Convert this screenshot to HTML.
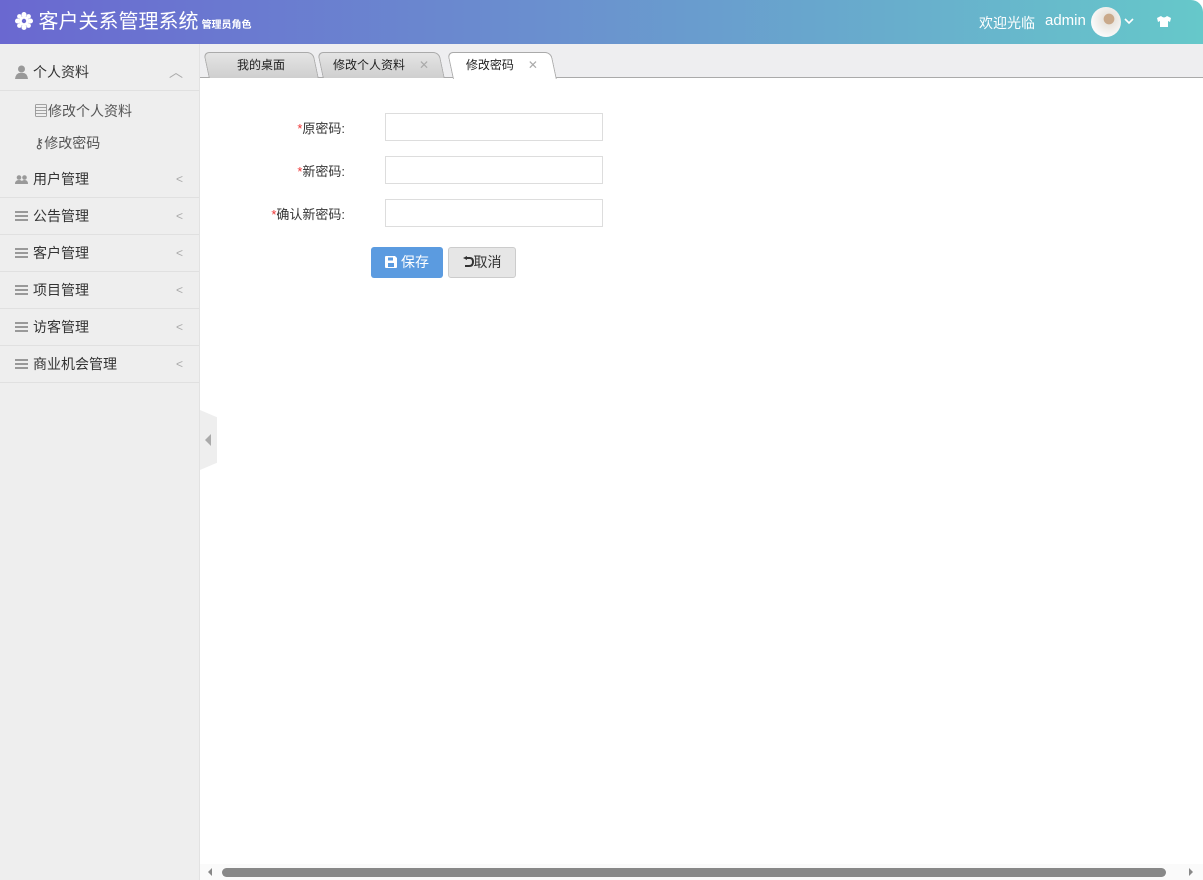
<!DOCTYPE html>
<html><head><meta charset="utf-8"><style>
*{margin:0;padding:0;box-sizing:border-box}
body{width:1203px;height:880px;overflow:hidden;font-family:"Liberation Sans","Noto Sans CJK SC",sans-serif;font-size:13px;color:#333;background:#fff;position:relative}
.hd{position:absolute;left:0;top:0;width:1203px;height:44px;background:linear-gradient(90deg,#6a68d0 0%,#6a8fcf 45%,#66c8ca 100%);border-top-right-radius:12px;color:#fff}
.hd .t{position:absolute;left:15px;top:9px;font-size:20px;line-height:26px}
.hd .t small{font-size:10px;font-weight:bold;margin-left:3px}
.side{position:absolute;left:0;top:44px;width:200px;height:836px;background:#eeeeee;border-right:1px solid #e2e2e2}
.it{position:absolute;left:0;width:199px;height:37px;border-bottom:1px solid #e0e0e0;line-height:37px;padding-left:33px;font-size:14px;color:#333}
.it .ic{position:absolute;left:15px;top:13px;width:13px;height:10px;border-top:2px solid #999;border-bottom:2px solid #999}
.it .ic:after{content:"";position:absolute;left:0;top:2px;width:13px;height:2px;background:#999}
.it .ar{position:absolute;right:16px;top:0;color:#aaa;font-size:12px}
.sub{position:absolute;left:34px;font-size:14px;color:#555}
.tabs{position:absolute;left:200px;top:44px;width:1003px;height:34px;background:#eeeef0;border-bottom:1px solid #aaa}
.tab{position:absolute;top:8px;height:26px;line-height:24px;text-align:center;font-size:12px;color:#222;background:linear-gradient(#e4e4e4,#cfcfcf);border:1px solid #aaa;border-bottom:none;border-radius:6px 6px 0 0;transform:skewX(12deg)}
.tab span{display:inline-block;transform:skewX(-12deg)}
.x{color:#aaa;margin-left:14px}
label.l{position:absolute;width:150px;left:195px;text-align:right;font-size:13px;color:#333}
label.l b{color:#e33;font-weight:normal}
.in{position:absolute;left:385px;width:218px;height:28px;border:1px solid #ddd;background:#fff}
.btn{position:absolute;top:247px;height:31px;line-height:31px;border-radius:3px;font-size:14px;text-align:center}
</style></head><body>
<div class="hd">
<div class="t"><svg width="18" height="18" style="vertical-align:-2px"><g fill="#fff"><circle cx="9" cy="9" r="5"/><circle cx="9" cy="2.5" r="2.5"/><circle cx="9" cy="15.5" r="2.5"/><circle cx="2.5" cy="9" r="2.5"/><circle cx="15.5" cy="9" r="2.5"/><circle cx="4.4" cy="4.4" r="2.3"/><circle cx="13.6" cy="4.4" r="2.3"/><circle cx="4.4" cy="13.6" r="2.3"/><circle cx="13.6" cy="13.6" r="2.3"/></g><circle cx="9" cy="9" r="2.2" fill="#6a68d0"/></svg> 客户关系管理系统<small>管理员角色</small></div>
<div style="position:absolute;left:979px;top:13px;font-size:14px">欢迎光临</div>
<div style="position:absolute;left:1045px;top:12px;font-size:15px">admin</div>
<div style="position:absolute;left:1091px;top:7px;width:30px;height:30px;border-radius:50%;background:radial-gradient(circle at 60% 40%,#c9a98a 0 20%,#e8e4de 22%,#fafafa 70%)"></div>
<svg style="position:absolute;left:1124px;top:17px" width="10" height="8"><path d="M1 2l4 4 4-4" stroke="#fff" stroke-width="1.6" fill="none"/></svg>
<svg style="position:absolute;left:1156px;top:15px" width="16" height="13"><path d="M5 1L1 3 2 7 4 6 4 12 12 12 12 6 14 7 15 3 11 1Q8 4 5 1Z" fill="#fff"/></svg>
</div>
<div class="side">
<div class="it" style="top:10px"><svg style="position:absolute;left:15px;top:11px" width="13" height="14"><circle cx="6.5" cy="4" r="3.5" fill="#999"/><path d="M0 14Q1 7 6.5 8Q12 7 13 14Z" fill="#999"/></svg>个人资料<span class="ar" style="font-size:14px">︿</span></div>
<div class="sub" style="top:57px">▤修改个人资料</div>
<div class="sub" style="top:89px">⚷修改密码</div>
<div class="it" style="top:117px"><svg style="position:absolute;left:15px;top:14px" width="13" height="9"><circle cx="4" cy="2.5" r="2.3" fill="#999"/><circle cx="9.5" cy="2.5" r="2.3" fill="#999"/><path d="M0 9Q0 5 4 5Q8 5 8 9ZM6 9Q6 5 9.5 5Q13 5 13 9Z" fill="#999"/></svg>用户管理<span class="ar">&lt;</span></div>
<div class="it" style="top:154px"><i class="ic"></i>公告管理<span class="ar">&lt;</span></div>
<div class="it" style="top:191px"><i class="ic"></i>客户管理<span class="ar">&lt;</span></div>
<div class="it" style="top:228px"><i class="ic"></i>项目管理<span class="ar">&lt;</span></div>
<div class="it" style="top:265px"><i class="ic"></i>访客管理<span class="ar">&lt;</span></div>
<div class="it" style="top:302px"><i class="ic"></i>商业机会管理<span class="ar">&lt;</span></div>
</div>
<div style="position:absolute;left:200px;top:410px;width:17px;height:60px;background:#eeeeee;clip-path:polygon(0 0,100% 12%,100% 88%,0 100%)"></div>
<div style="position:absolute;left:205px;top:434px;width:0;height:0;border-top:6px solid transparent;border-bottom:6px solid transparent;border-right:6px solid #aaa"></div>
<div class="tabs">
<div class="tab" style="left:6px;width:110px"><span>我的桌面</span></div>
<div class="tab" style="left:120px;width:122px"><span>修改个人资料<b class="x" style="font-weight:normal">✕</b></span></div>
<div class="tab" style="left:250px;width:104px;background:#fff;height:27px"><span>修改密码<b class="x" style="font-weight:normal">✕</b></span></div>
</div>
<label class="l" style="top:118px"><b>*</b>原密码:</label><div class="in" style="top:113px"></div>
<label class="l" style="top:161px"><b>*</b>新密码:</label><div class="in" style="top:156px"></div>
<label class="l" style="top:204px"><b>*</b>确认新密码:</label><div class="in" style="top:199px"></div>
<div class="btn" style="left:371px;width:72px;background:#5b9be0;color:#fff"><svg width="12" height="12" style="vertical-align:-1px;margin-right:4px"><path d="M0 1Q0 0 1 0H10L12 2V11Q12 12 11 12H1Q0 12 0 11Z" fill="#fff"/><rect x="3" y="1.5" width="5" height="3" fill="#5b9be0"/><rect x="3" y="7" width="6" height="4" fill="#5b9be0"/></svg>保存</div>
<div class="btn" style="left:448px;width:68px;background:#e6e6e6;border:1px solid #ccc;line-height:29px;color:#333"><svg width="11" height="12" style="vertical-align:-1px"><path d="M3 2H7Q10 2 10 6Q10 10 6 10H2" stroke="#333" stroke-width="2" fill="none"/><path d="M0 2L4 0V4Z" fill="#333"/></svg>取消</div>
<div style="position:absolute;left:200px;top:864px;width:1003px;height:16px;background:#fafafa"></div>
<div style="position:absolute;left:208px;top:868px;border-top:4px solid transparent;border-bottom:4px solid transparent;border-right:4px solid #888"></div>
<div style="position:absolute;left:222px;top:868px;width:944px;height:9px;border-radius:5px;background:#888"></div>
<div style="position:absolute;left:1189px;top:868px;border-top:4px solid transparent;border-bottom:4px solid transparent;border-left:4px solid #888"></div>
</body></html>
